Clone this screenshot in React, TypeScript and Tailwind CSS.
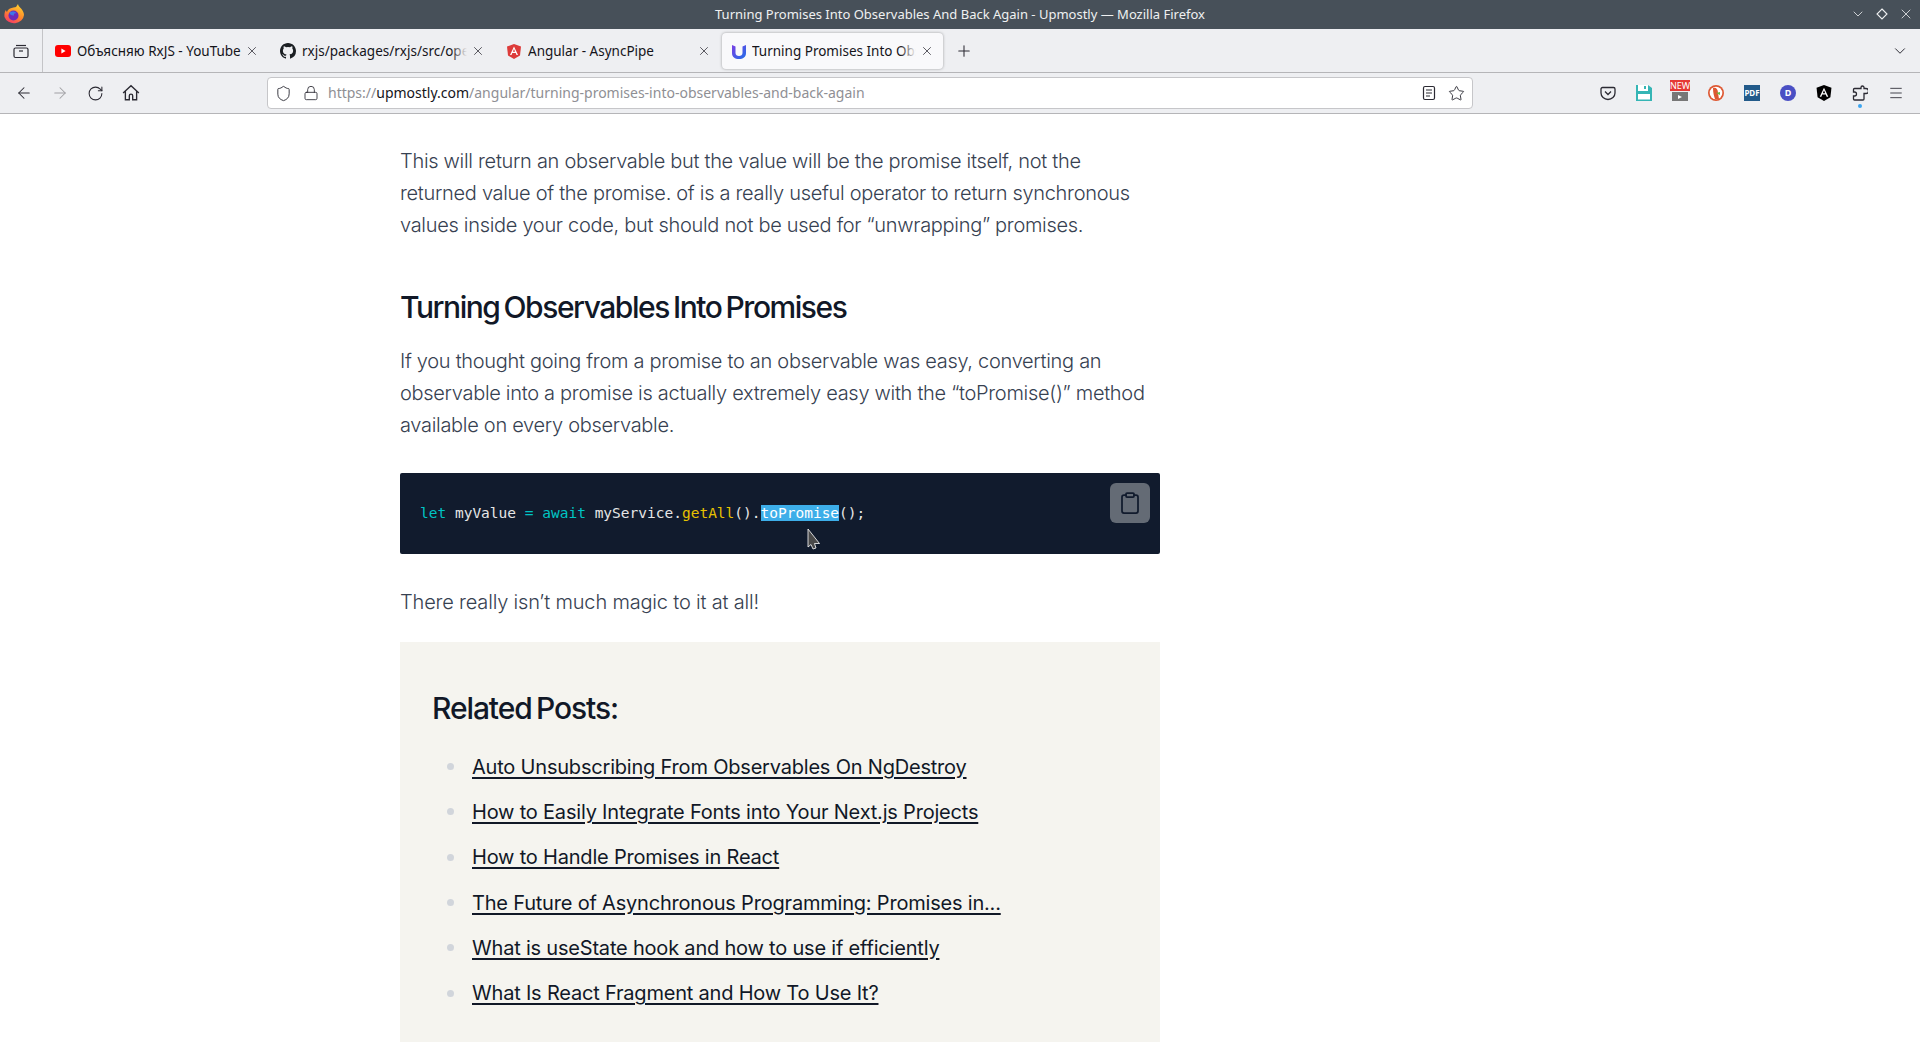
import { ArrowLeft, ArrowRight, ChevronDown, Clipboard, Lock, Menu, Plus, RotateCw, Shield, Star, X } from 'lucide-react';

const ui = 'font-["Noto_Sans",sans-serif]';
const body = 'font-["Inter",sans-serif]';

const relatedPosts = [
  'Auto Unsubscribing From Observables On NgDestroy',
  'How to Easily Integrate Fonts into Your Next.js Projects',
  'How to Handle Promises in React',
  'The Future of Asynchronous Programming: Promises in...',
  'What is useState hook and how to use if efficiently',
  'What Is React Fragment and How To Use It?',
];

function Firefox() {
  return (
    <svg width="20" height="20" viewBox="0 0 20 20">
      <defs>
        <linearGradient id="ff" x1="0.7" y1="0" x2="0.2" y2="1">
          <stop offset="0" stopColor="#ffd02e" />
          <stop offset="0.5" stopColor="#ff8a2a" />
          <stop offset="1" stopColor="#f5336b" />
        </linearGradient>
      </defs>
      <path d="M14 0c0 2 2 3 3.500 5 1.500 2 2.500 4 2.500 6a10 9 0 0 1-19.500 2C0 10 1 7 2 6c0 1 .5 1.500 1 2 .5-2 2-3 3-3.500 2-1 5-1 6-1.500.5-1 1.500-2 2-3z" fill="url(#ff)" />
      <circle cx="9.500" cy="11.500" r="5" fill="#6d2bb8" />
      <path d="M5.500 8.500c2-1.500 6-1.500 7 1-2-.5-3 .5-2.500 2-2 .5-4.500-1-4.500-3z" fill="#3f76e8" />
    </svg>
  );
}

function Tab({ title, icon, active, width, fade }: { title: string; icon: React.ReactNode; active?: boolean; width: string; fade?: boolean }) {
  return (
    <div className={`flex h-[36px] items-center ${width} ${active ? 'rounded-[4px] bg-[#f9f9fb] pl-[9px] pr-[9px] shadow-[0_0_3px_rgba(0,0,0,0.35)]' : 'pl-[10px] pr-[11px]'}`}>
      <span className={`flex h-4 w-4 shrink-0 items-center justify-center ${active ? 'mr-[5px]' : 'mr-[6px]'}`}>{icon}</span>
      <span className="relative flex-1 overflow-hidden whitespace-nowrap pt-[1px] text-[13.500px] text-[#15141a]">
        {title}
        {fade && <span className={`absolute inset-y-0 right-0 w-[16px] bg-gradient-to-r from-transparent ${active ? 'to-[#f9f9fb]' : 'to-[#eeeff2]'}`} />}
      </span>
      <X size={14} strokeWidth={1.3} className="ml-[4px] shrink-0 text-[#2b2a33]" />
    </div>
  );
}

function TitleBar() {
  return (
    <div className="relative flex h-[29px] shrink-0 items-center justify-center bg-[#475059]">
      <div className="absolute left-[4px] top-[4px]"><Firefox /></div>
      <span className={`${ui} text-[13px] text-[#eff0f1]`}>Turning Promises Into Observables And Back Again - Upmostly — Mozilla Firefox</span>
      <div className="absolute right-[6px] top-[6px] flex items-center gap-[8px] text-[#eff0f1]">
        <ChevronDown size={16} strokeWidth={1.2} />
        <svg width="16" height="16" viewBox="0 0 16 16" fill="none" stroke="currentColor" strokeWidth="1.1"><path d="M8 3l5 5-5 5-5-5z" /></svg>
        <X size={16} strokeWidth={1.2} />
      </div>
    </div>
  );
}

function TabBar() {
  return (
    <div className={`${ui} flex h-[44px] shrink-0 items-center border-b border-[#b5b5b8] bg-[#eeeff2]`}>
      <div className="flex h-full w-[43px] items-center justify-center border-r border-[#c4c4c7]">
        <svg width="16" height="16" viewBox="0 0 16 16" fill="none" stroke="#2b2a33" strokeWidth="1.2">
          <path d="M3 2.500h10" /><rect x="1" y="5" width="14" height="9.500" rx="1.500" /><path d="M6 8h4" />
        </svg>
      </div>
      <div className="flex items-center pl-[2px] pt-[1px]">
        <Tab
          title="Объясняю RxJS - YouTube"
          width="w-[225px]"
          icon={<svg width="16" height="12" viewBox="0 0 16 12"><rect width="16" height="12" rx="3" fill="#f00" /><path d="M6.400 3.400l4.200 2.600-4.200 2.600z" fill="#fff" /></svg>}
        />
        <Tab
          title="rxjs/packages/rxjs/src/operators"
          width="w-[226px]"
          fade
          icon={<svg width="16" height="16" viewBox="0 0 16 16" fill="#1b1f23"><path d="M8 0C3.580 0 0 3.580 0 8c0 3.540 2.290 6.530 5.470 7.590.4.070.55-.17.55-.38v-1.340c-2.230.48-2.700-1.070-2.700-1.070-.36-.92-.89-1.170-.89-1.170-.73-.5.05-.49.05-.49.8.060 1.230.83 1.230.83.71 1.220 1.870.87 2.330.66.07-.52.28-.87.51-1.070-1.780-.2-3.640-.89-3.640-3.950 0-.87.31-1.590.82-2.150-.08-.2-.36-1.020.08-2.120 0 0 .67-.21 2.200.82a7.650 7.650 0 0 1 4 0c1.530-1.040 2.200-.82 2.200-.82.44 1.100.16 1.920.08 2.120.51.56.82 1.270.82 2.150 0 3.070-1.870 3.750-3.650 3.950.29.25.54.73.54 1.480v2.200c0 .21.15.46.55.38A8 8 0 0 0 16 8c0-4.420-3.580-8-8-8z" /></svg>}
        />
        <Tab
          title="Angular - AsyncPipe"
          width="w-[226px]"
          icon={<svg width="14" height="15" viewBox="0 0 14 15"><path d="M7 0L0 2.500l1 9L7 15l6-3.500 1-9z" fill="#dd3b3a" /><path d="M7 2.500L3 11h1.500l.8-2h3.400l.8 2H11zM5.900 7.800L7 5l1.100 2.800z" fill="#fff" /></svg>}
        />
        <Tab
          title="Turning Promises Into Observables"
          width="w-[221px]"
          active
          fade
          icon={
            <svg width="14" height="15" viewBox="0 0 14 15">
              <defs>
                <linearGradient id="um" x1="0" y1="0" x2="1" y2="1">
                  <stop offset="0" stopColor="#7b3fe4" />
                  <stop offset="1" stopColor="#1f6fe8" />
                </linearGradient>
              </defs>
              <path d="M0 1l3.500 1.500V9c0 2 1.500 3 3.500 3s3.500-1 3.500-3V2.500L14 1v8c0 4-3 6-7 6s-7-2-7-6z" fill="url(#um)" />
            </svg>
          }
        />
        <Plus size={18} strokeWidth={1.4} className="ml-[12px] text-[#2b2a33]" />
      </div>
      <ChevronDown size={18} strokeWidth={1.3} className="ml-auto mr-[11px] mt-[1px] text-[#2b2a33]" />
    </div>
  );
}

function NavBar() {
  return (
    <div className={`${ui} flex h-[41px] shrink-0 items-center border-b border-[#b5b5b8] bg-[#eeeff2] text-[#2b2a33]`}>
      <div className="flex w-[267px] items-center gap-[18px] pl-[15px]">
        <ArrowLeft size={18} strokeWidth={1.4} />
        <ArrowRight size={18} strokeWidth={1.4} className="text-[#a0a0a4]" />
        <RotateCw size={17} strokeWidth={1.5} />
        <svg width="18" height="18" viewBox="0 0 16 16" fill="none" stroke="currentColor" strokeWidth="1.2">
          <path d="M1 8l7-6.500L15 8M3 6.500V14h3.500v-3.500a1.500 1.500 0 0 1 3 0V14H13V6.500" />
        </svg>
      </div>
      <div className="flex h-[32px] w-[1206px] items-center rounded-[4px] border border-[#c6c6c9] bg-white pl-[7px] pr-[7px]">
        <Shield size={17} strokeWidth={1.3} />
        <Lock size={16} strokeWidth={1.3} className="ml-[11px]" />
        <span className="mb-[1px] ml-[9px] text-[14px] text-[#8f8f94]">
          https://<span className="text-[#15141a]">upmostly.com</span>/angular/turning-promises-into-observables-and-back-again
        </span>
        <svg width="16" height="16" viewBox="0 0 16 16" fill="none" stroke="currentColor" strokeWidth="1.2" className="ml-auto">
          <rect x="2.500" y="1.500" width="11" height="13" rx="1.500" /><path d="M5 5h6M5 8h6M5 11h4" />
        </svg>
        <Star size={17} strokeWidth={1.3} className="ml-[11px]" />
      </div>
      <div className="ml-[127px] flex items-center gap-[20px]">
        <svg width="16" height="16" viewBox="0 0 16 16" fill="none" stroke="#2b2a33" strokeWidth="1.3"><path d="M2.500 2.500h11a1.500 1.500 0 0 1 1.500 1.500v4a7 6.500 0 0 1-14 0V4a1.500 1.500 0 0 1 1.500-1.500z" /><path d="M5 6.500l3 3 3-3" /></svg>
        <svg width="16" height="16" viewBox="0 0 16 16"><path d="M0 0h12l4 3v13H0z" fill="#35b5b5" /><path d="M2 0h10v6H2zM2 9h12v5.500H2z" fill="#fff" /><path d="M8 1h2v3H8z" fill="#35b5b5" /></svg>
        <div className="relative h-[16px] w-[16px]">
          <div className="absolute -left-[2px] -top-[5px] h-[11px] w-[20px] overflow-hidden bg-[#e53935] text-center text-[9px] leading-[11px] text-white">NEW</div>
          <div className="absolute left-0 top-[7px] flex h-[9px] w-[16px] items-center justify-center bg-[#777]"><div className="h-0 w-0 border-y-[2px] border-l-[4px] border-y-transparent border-l-white" /></div>
        </div>
        <svg width="16" height="16" viewBox="0 0 16 16"><circle cx="8" cy="8" r="8" fill="#de5833" /><circle cx="8" cy="8" r="6.300" fill="#fff" /><path d="M5 3c3-1 5 1 5 5l1 6H7C6 11 5 8 5 3z" fill="#de5833" /><path d="M8 8l4-1v3z" fill="#65bc46" /></svg>
        <div className="flex h-[16px] w-[16px] items-center justify-center bg-[#225a8a] text-[8px] font-bold text-white">PDF</div>
        <div className="flex h-[16px] w-[16px] items-center justify-center rounded-full bg-[#4a4fc4] text-[9px] font-bold text-white">D</div>
        <svg width="16" height="16" viewBox="0 0 14 15"><path d="M7 0L0 2.500l1 9L7 15l6-3.500 1-9z" fill="#000" /><path d="M7 2.500L3 11h1.500l.8-2h3.400l.8 2H11zM5.900 7.800L7 5l1.100 2.800z" fill="#fff" /></svg>
        <div className="relative">
          <svg width="16" height="16" viewBox="0 0 16 16" fill="none" stroke="#2b2a33" strokeWidth="1.300" className="block">
            <path d="M2.500 15h8.500a1 1 0 0 0 1-1V8.500h2a2.500 2.500 0 0 0 0-5h-2V2.500a1.500 1.500 0 0 0-3 0V3.500H2.500a1 1 0 0 0-1 1V7h1a2 2 0 0 1 0 4h-1v3a1 1 0 0 0 1 1z" />
          </svg>
          <div className="absolute left-[6px] top-[19px] h-[4px] w-[4px] rounded-full bg-[#3da5f0]" />
        </div>
        <Menu size={16} strokeWidth={1.3} />
      </div>
    </div>
  );
}

function Cursor() {
  return (
    <svg width="14" height="22" viewBox="0 0 14 22" className="absolute left-[407px] top-[55px]">
      <path d="M1 1v18l3-2.500 2 4.500 3-1-1.500-4.500h5z" fill="#4a4a4a" stroke="#fff" strokeWidth="0.8" />
    </svg>
  );
}

export default function App() {
  return (
    <div className="flex h-[1042px] flex-col overflow-hidden bg-white">
      <TitleBar />
      <TabBar />
      <NavBar />
      <main className={`${body} ml-[400px] w-[760px] shrink-0 text-[20px] font-light leading-[32px] tracking-[-0.3px] text-[#374151]`}>
        <p className="mt-[31px]">
          This will return an observable but the value will be the promise itself, not the returned value of the promise. of is a really useful operator to return synchronous values inside your code, but should not be used for “unwrapping” promises.
        </p>
        <h2 className="mt-[46px] text-[30px] font-medium leading-[40px] tracking-[-1.45px] text-[#111827] [word-spacing:-2.5px]">Turning Observables Into Promises</h2>
        <p className="mt-[18px]">
          If you thought going from a promise to an observable was easy, converting an observable into a promise is actually extremely easy with the “toPromise()” method available on every observable.
        </p>
        <div className="relative mt-[32px] flex h-[81px] items-center rounded-[2px] bg-[#111b2d] pb-[1px] pl-[20px] font-['DejaVu_Sans_Mono',monospace] text-[14.500px] font-normal leading-[20px] tracking-normal text-[#e6e6e6]">
          <span>
            <span className="text-[#00c4c4]">let</span> myValue <span className="text-[#00c4c4]">=</span> <span className="text-[#00c4c4]">await</span> myService.<span className="text-[#e6c200]">getAll</span>().<span className="bg-[#3daee9] text-white">toPromise</span>();
          </span>
          <button className="absolute right-[10px] top-[10px] flex h-[40px] w-[40px] items-center justify-center rounded-[6px] bg-[#646b75] text-[#111b2d]">
            <Clipboard size={24} strokeWidth={1.750} />
          </button>
          <Cursor />
        </div>
        <p className="mt-[32px] tracking-[-0.18px]">There really isn’t much magic to it at all!</p>
        <section className="mt-[24px] bg-[#f5f4ef] px-[32px] pb-[60px] pt-[46px]">
          <h3 className="text-[30px] font-medium leading-[40px] tracking-[-1.1px] text-[#111827] [word-spacing:-2.5px]">Related Posts:</h3>
          <ul className="mt-[16px]">
            {relatedPosts.map((post) => (
              <li key={post} className="flex h-[45.300px] items-center">
                <span className="ml-[15px] mr-[18px] h-[7px] w-[7px] rounded-full bg-[#d1d5db]" />
                <a className="font-normal tracking-[-0.2px] text-[#111827] underline decoration-[2px] underline-offset-[3px]">{post}</a>
              </li>
            ))}
          </ul>
        </section>
      </main>
    </div>
  );
}
